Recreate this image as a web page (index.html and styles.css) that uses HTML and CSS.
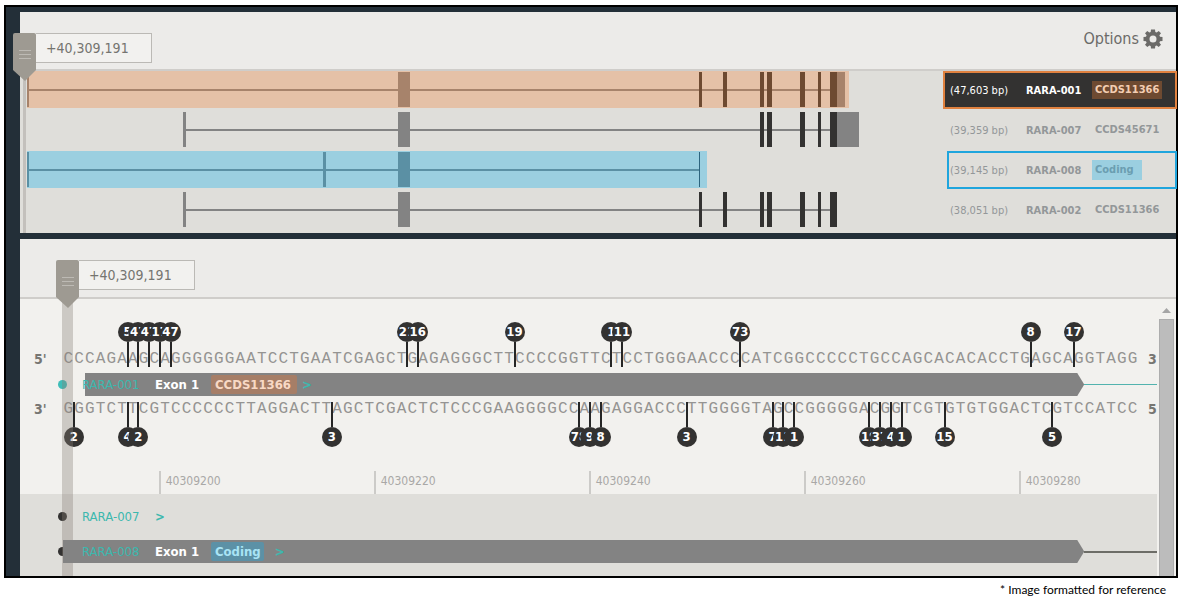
FILE: index.html
```html
<!DOCTYPE html>
<html lang="en">
<head>
<meta charset="utf-8">
<title>RARA transcripts</title>
<link rel="stylesheet" href="styles.css">
</head>
<body>
<main class="viewer">
  <section class="panel overview">
    <header class="bar">
      <div class="locator locator-overview">
        <button class="handle" type="button" aria-label="Move position">
          <svg width="23" height="48" viewBox="0 0 23 48"><path d="M2 0H21Q23 0 23 2V37L12 48L0 37V2Q0 0 2 0Z" fill="#9e9a92"/><path d="M6 17.5H18M6 21.5H18M6 25.5H18" stroke="#bdbab4"/></svg>
        </button>
        <input class="position" type="text" value="+40,309,191" aria-label="Position">
      </div>
      <button class="options" type="button">Options
        <svg width="20" height="20" viewBox="0 0 20 20"><path fill="#6b6a68" fill-rule="evenodd" d="M8 0.500H12L12.300 3L13.700 3.600L15.700 2L18 4.300L16.400 6.300L17 7.700L19.500 8V12L17 12.300L16.400 13.700L18 15.700L15.700 18L13.700 16.400L12.300 17L12 19.500H8L7.700 17L6.300 16.400L4.300 18L2 15.700L3.600 13.700L3 12.300L0.500 12V8L3 7.700L3.600 6.300L2 4.300L4.300 2L6.300 3.600L7.700 3ZM10 6.500A3.500 3.500 0 1 0 10 13.500A3.500 3.500 0 1 0 10 6.500Z"/></svg>
      </button>
    </header>
    <div class="transcripts">
      <div class="row orange">
        <div class="track" data-track="001"></div>
        <div class="label"><span class="size">(47,603 bp)</span><span class="name">RARA-001</span><span class="tag">CCDS11366</span></div>
      </div>
      <div class="row">
        <div class="track" data-track="007"></div>
        <div class="label"><span class="size">(39,359 bp)</span><span class="name">RARA-007</span><span class="tag">CCDS45671</span></div>
      </div>
      <div class="row blue">
        <div class="track" data-track="008"></div>
        <div class="label"><span class="size">(39,145 bp)</span><span class="name">RARA-008</span><span class="tag">Coding</span></div>
      </div>
      <div class="row">
        <div class="track" data-track="002"></div>
        <div class="label"><span class="size">(38,051 bp)</span><span class="name">RARA-002</span><span class="tag">CCDS11366</span></div>
      </div>
      <div class="cursor-line"></div>
    </div>
  </section>

  <section class="panel detail">
    <header class="bar">
      <div class="locator">
        <button class="handle" type="button" aria-label="Move position">
          <svg width="23" height="48" viewBox="0 0 23 48"><path d="M2 0H21Q23 0 23 2V37L12 48L0 37V2Q0 0 2 0Z" fill="#9e9a92"/><path d="M6 17.5H18M6 21.5H18M6 25.5H18" stroke="#bdbab4"/></svg>
        </button>
        <input class="position" type="text" value="+40,309,191" aria-label="Position">
      </div>
    </header>
    <div class="scroller">
      <div class="content">
        <div class="sequence">
          <div class="lane forward">
            <span class="end">5'</span>
            <div class="bases" id="forward"></div>
            <span class="end end-right">3</span>
          </div>
          <div class="lane exon-row teal">
            <div class="exon">
              <i class="dot"></i><i class="intron"></i><i class="block block-short"></i>
              <a class="id" href="#rara-001">RARA-001</a><b class="num">Exon 1</b><b class="chip chip-orange">CCDS11366</b><b class="next">&gt;</b>
            </div>
          </div>
          <div class="lane reverse">
            <span class="end">3'</span>
            <div class="bases" id="reverse"></div>
            <span class="end end-right">5</span>
          </div>
          <div class="lane"><div class="ruler" id="ruler"></div></div>
        </div>
        <div class="others">
          <div class="lane exon-row tall">
            <div class="exon">
              <i class="dot"></i>
              <a class="id" href="#rara-007">RARA-007</a><b class="next">&gt;</b>
            </div>
          </div>
          <div class="lane exon-row tall">
            <div class="exon">
              <i class="dot"></i><i class="intron"></i><i class="block"></i>
              <a class="id" href="#rara-008">RARA-008</a><b class="num">Exon 1</b><b class="chip chip-blue">Coding</b><b class="next">&gt;</b>
            </div>
          </div>
        </div>
        <div class="column"></div>
      </div>
      <div class="scrollbar">
        <svg width="9" height="5" viewBox="0 0 9 5"><path d="M0 5L4.5 0L9 5Z" fill="#a5a5a5"/></svg>
        <div class="thumb"></div>
      </div>
    </div>
  </section>
</main>
<p class="note">* Image formatted for reference</p>
<script src="app.js"></script>
</body>
</html>
```
FILE: styles.css
```css
* { box-sizing: border-box; }

body {
  margin: 0;
  padding: 5px 5px 0 4px;
  background: #fff;
  font-family: "DejaVu Sans Condensed", "DejaVu Sans", sans-serif;
  font-stretch: condensed;
  color: #77767a;
}

button, input {
  margin: 0;
  padding: 0;
  border: 0;
  background: none;
  font: inherit;
  color: inherit;
}

.viewer {
  display: grid;
  gap: 6px;
  padding: 5px 0 0 14px;
  border: 2px solid #000;
  background: #232f38;
}

.panel { min-width: 0; }

.bar {
  display: flex;
  justify-content: space-between;
  align-items: flex-start;
  height: 59px;
  border-bottom: 2px solid #cfcdca;
  background: #ecebe9;
}

.detail .bar { height: 60px; }

.locator {
  position: relative;
  z-index: 3;
  display: flex;
  height: 30px;
  margin: 21px 0 0 36px;
}

.locator-overview { margin-left: -7px; }

.handle { width: 23px; height: 48px; }
.handle svg { display: block; }

.position {
  width: 116px;
  height: 30px;
  padding-left: 10px;
  border: 1px solid #bbb9b5;
  border-left: 0;
  background: #f2f1ef;
  font-size: 14px;
  color: #757470;
}

.options {
  display: flex;
  align-items: center;
  gap: 4px;
  margin: 17px 13px 0 0;
  font-size: 16px;
  line-height: 20px;
  color: #6b6a68;
}

/* overview */
.transcripts {
  position: relative;
  display: grid;
  gap: 2px;
  padding-bottom: 4px;
  background: #dfdeda;
}

.row {
  --utr: #838383;
  --coding: #333231;
  display: flex;
  height: 38px;
}

.row.orange { --utr: #a7836b; --coding: #6e4a31; }
.row.blue { --utr: #5b90a4; --coding: #2d647e; }

.track { position: relative; flex: 1; }
.track i { position: absolute; }
.track .hl { top: 0; height: 37px; }
.orange .hl { background: #e5c1a7; }
.blue .hl { background: #9bcfe0; }
.track .line { top: 18px; height: 2px; background: var(--utr); }
.track .utr, .track .cds { top: 1px; height: 35px; }
.track .utr { background: var(--utr); }
.track .cds { background: var(--coding); }

.label {
  display: grid;
  grid-template-columns: 76px 66px 1fr;
  align-items: center;
  width: 234px;
  margin-right: -1px;
  padding-left: 7px;
  font-size: 11px;
  color: #939799;
}

.name, .tag { font-weight: bold; }

.tag {
  justify-self: start;
  padding: 0 3px;
  line-height: 18px;
}

.orange .label {
  padding-left: 5px;
  border: 2px solid #e0813f;
  background: #333231;
  color: #fff;
}
.orange .tag { background: #6e4a31; color: #f3cdb2; }
.blue .label {
  width: 230px;
  margin-left: 4px;
  padding-left: 1px;
  border: 2px solid #1fa5dd;
}
.blue .tag { padding-right: 8px; line-height: 20px; background: #9bcfe0; color: #6b9eb1; }

.cursor-line {
  position: absolute;
  top: 0;
  bottom: 0;
  left: 3px;
  width: 3px;
  background: #c3c0bc;
}

/* detail */
.scroller { display: flex; background: #f2f1ee; }
.content { position: relative; flex: 1; min-width: 0; overflow: hidden; }
.sequence { padding-top: 23px; }
.others { padding: 5px 0 7px; background: #dfdeda; }

.lane {
  position: relative;
  display: grid;
  grid-template-columns: 43px minmax(0, 1fr) 19px;
}

.forward { height: 51px; padding-top: 27px; }
.reverse { height: 75px; padding-top: 3px; }

.end {
  padding-left: 14px;
  font-size: 14px;
  font-weight: bold;
  line-height: 20px;
  color: #777672;
  white-space: nowrap;
}
.end-right { padding-left: 10px; }

.bases {
  position: relative;
  display: grid;
  grid-template-columns: repeat(100, 1fr);
  height: 20px;
  font-family: "Liberation Mono", monospace;
  font-size: 16px;
  line-height: 20px;
  color: #959492;
  text-align: center;
}

.pin {
  position: absolute;
  display: flex;
  flex-direction: column;
  align-items: center;
  width: 20px;
  margin-left: -10px;
}
.forward .pin { bottom: 6px; }
.reverse .pin { top: 3px; flex-direction: column-reverse; }
.pin b {
  width: 20px;
  height: 20px;
  border-radius: 50%;
  background: #333231;
  font: bold 13px/20px "DejaVu Sans Condensed", "DejaVu Sans", sans-serif;
  font-stretch: condensed;
  color: #fff;
}
.pin::after { content: ""; width: 2px; height: 25px; background: #262626; }
.forward .pin { bottom: 2px; }

.exon-row { height: 23px; }
.exon-row.tall { height: 35px; }

.exon {
  position: relative;
  grid-column: 2;
  display: flex;
  align-items: center;
  padding-left: 19px;
  font-size: 13px;
}
.exon > a, .exon > b { position: relative; z-index: 2; }
.exon > i { position: absolute; }

.dot {
  left: -5px;
  width: 9px;
  height: 9px;
  border-radius: 50%;
  background: #333231;
}
.intron { left: 95%; right: -19px; height: 2px; background: #6d6d67; }
.block {
  z-index: 1;
  left: 0;
  right: 5%;
  height: 23px;
  background: #838383;
  clip-path: polygon(0 0, calc(100% - 7px) 0, 100% 50%, calc(100% - 7px) 100%, 0 100%);
}
.block-short { left: 2%; }
.teal .dot { background: #3fbdb8; }
.teal .intron { height: 1px; background: #53b3ae; }

.id { width: 73px; color: #3cb8ae; text-decoration: none; }
.num { width: 56px; color: #fff; }
.chip { margin-right: 5px; padding: 0 4px; border-radius: 2px; line-height: 19px; }
.chip-orange { padding-right: 6px; background: #a67e67; color: #f8d9c5; }
.chip-blue { padding-right: 3px; margin-right: 11px; background: #5c91a6; color: #a9e4f5; }
.next { color: #3cb8ae; }

.ruler { position: relative; grid-column: 2; height: 23px; }
.tick {
  position: absolute;
  height: 23px;
  margin-left: -1px;
  padding-left: 5px;
  border-left: 2px solid #cccbc8;
  font-size: 12px;
  line-height: 20px;
  color: #a9a8a6;
}

.column {
  position: absolute;
  top: 0;
  bottom: 0;
  left: 42px;
  width: 11px;
  background: rgba(135, 125, 118, 0.35);
}

.scrollbar {
  display: flex;
  flex-direction: column;
  align-items: center;
  width: 19px;
  padding-top: 9px;
}
.thumb { flex: 1; width: 15px; margin-top: 6px; border: 1px solid #adadad; border-bottom: 0; background: #bcbcbc; }

.note {
  margin: 4px 12px 0 0;
  font: 12px/16px Lato, sans-serif;
  color: #000;
  text-align: right;
}
```
FILE: app.js
```js
const SPAN = 923;
const shared = [[760, 4], [767, 5], [800, 5], [818, 3], [830, 7]];
const early = [[699, 3], [723, 4]];
const transcripts = {
  "001": { hl: [27, 822], line: [27, 804], utr: [[27, 2], [398, 12], [837, 8]], cds: early.concat(shared) },
  "007": { line: [183, 648], utr: [[183, 3], [398, 12], [836, 23]], cds: shared },
  "008": { hl: [27, 680], line: [27, 673], utr: [[27, 2], [323, 3], [398, 12]], cds: [[699, 1]] },
  "002": { line: [183, 648], utr: [[183, 3], [398, 12]], cds: early.concat(shared) }
};

function add(parent, tag, cls, text) {
  const el = document.createElement(tag);
  if (cls) el.className = cls;
  if (text) el.textContent = text;
  parent.appendChild(el);
  return el;
}

function feature(track, cls, [x, w]) {
  const el = add(track, "i", cls);
  el.style.left = (x - 20) / SPAN * 100 + "%";
  el.style.width = w / SPAN * 100 + "%";
}

document.querySelectorAll(".track").forEach(track => {
  const t = transcripts[track.dataset.track];
  if (t.hl) feature(track, "hl", t.hl);
  feature(track, "line", t.line);
  t.utr.forEach(f => feature(track, "utr", f));
  t.cds.forEach(f => feature(track, "cds", f));
});

const forward = "CCCAGAAGCAGGGGGGAATCCTGAATCGAGCTGAGAGGGCTTCCCCGGTTCTCCTGGGAACCCCATCGGCCCCCTGCCAGCACACACCTGAGCAGGTAGG";
const pair = { A: "T", T: "A", C: "G", G: "C" };
const reverse = [...forward].map(b => pair[b]).join("");

function strand(id, bases, pins) {
  const el = document.getElementById(id);
  [...bases].forEach(b => add(el, "span", "", b));
  pins.forEach(([at, n]) => {
    const pin = add(el, "div", "pin");
    pin.style.left = at + "%";
    add(pin, "b", "", String(n)).style.textAlign = "center";
  });
}

strand("forward", forward, [[6, 5], [7, 47], [8, 47], [9, 17], [10, 47], [32, 21], [33, 16], [42, 19], [51, 1], [52, 11], [63, 73], [90, 8], [94, 17]]);
strand("reverse", reverse, [[1, 2], [6, 4], [7, 2], [25, 3], [48, 78], [49, 9], [50, 8], [58, 3], [66, 7], [67, 11], [68, 1], [75, 19], [76, 37], [77, 4], [78, 1], [82, 15], [92, 5]]);

const ruler = document.getElementById("ruler");
for (let at = 9; at < 100; at += 20) {
  add(ruler, "span", "tick", String(40309191 + at)).style.left = at + "%";
}
```
